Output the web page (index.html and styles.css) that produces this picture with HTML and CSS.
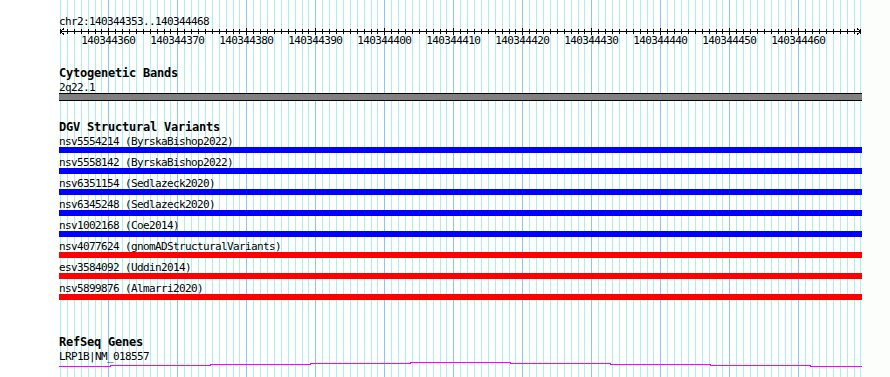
FILE: index.html
```html
<!DOCTYPE html>
<html>

<head>
    <link rel="stylesheet" href="styles.css">
</head>

<body>

    <div class="page">
        <div class="gutter"></div>

        <div class="tracks">
            <svg class="grid" id="grid" width="803" height="377"></svg>

            <div class="label locus">chr2:140344353..140344468</div>
            <svg class="ruler" id="ruler" width="803" height="20">
                <line x1="1" y1="4.5" x2="802" y2="4.5" class="axis" />
                <polyline points="5,1.5 1.5,4.5 5,7.5" class="axis" />
                <polyline points="798,1.5 801.5,4.5 798,7.5" class="axis" />
            </svg>

            <section class="track cyto">
                <h2 class="track-title">Cytogenetic Bands</h2>
                <div class="label">2q22.1</div>
                <div class="band"></div>
            </section>

            <section class="track dgv">
                <h2 class="track-title">DGV Structural Variants</h2>
                <div class="label">nsv5554214 (ByrskaBishop2022)</div>
                <div class="bar gain"></div>
                <div class="label">nsv5558142 (ByrskaBishop2022)</div>
                <div class="bar gain"></div>
                <div class="label">nsv6351154 (Sedlazeck2020)</div>
                <div class="bar gain"></div>
                <div class="label">nsv6345248 (Sedlazeck2020)</div>
                <div class="bar gain"></div>
                <div class="label">nsv1002168 (Coe2014)</div>
                <div class="bar gain"></div>
                <div class="label">nsv4077624 (gnomADStructuralVariants)</div>
                <div class="bar loss"></div>
                <div class="label">esv3584092 (Uddin2014)</div>
                <div class="bar loss"></div>
                <div class="label">nsv5899876 (Almarri2020)</div>
                <div class="bar loss"></div>
            </section>

            <section class="track refseq">
                <h2 class="track-title">RefSeq Genes</h2>
                <div class="label">LRP1B|NM_018557</div>
                <svg class="gene" width="803" height="6">
                    <polyline points="0,4.5 51,4.5 51,3.5 151,3.5 151,2.5 251,2.5 251,1.5 351,1.5 351,0.5 451,0.5 451,1.5 551,1.5 551,2.5 651,2.5 651,3.5 751,3.5 751,4.5 803,4.5" />
                </svg>
            </section>
        </div>

        <div class="margin"></div>
    </div>

    <script>
        // 116 bases from 140344353 to 140344468, 6.9px each
        const start = 140344353;
        const bases = 116;
        const bp = 6.9;
        const ns = "http://www.w3.org/2000/svg";

        let grid = document.getElementById("grid");
        let ruler = document.getElementById("ruler");

        function el(name, attrs, parent) {
            let node = document.createElementNS(ns, name);
            for (let k in attrs) {
                node.setAttribute(k, attrs[k]);
            }
            parent.appendChild(node);
            return node;
        }

        for (let i = 0; i <= bases; i++) {
            let x = Math.round(60 + i * bp) - 59 + 0.5;
            let major = (start + i) % 10 === 0;

            el("line", { x1: x, y1: 0, x2: x, y2: 377, class: major ? "major" : "minor" }, grid);
            el("line", { x1: x, y1: major ? 1 : 2, x2: x, y2: major ? 8 : 7, class: "axis" }, ruler);

            if (major) {
                let t = el("text", { x: 1 + i * bp, y: 17, class: "tick-label" }, ruler);
                t.textContent = start + i;
            }
        }
    </script>

</body>

</html>
```

FILE: styles.css
```css
html,
body {
    margin: 0;
    background: #ffffff;
}

.page {
    display: flex;
    min-height: 377px;
}

.gutter {
    width: 59px;
    flex: none;
}

.margin {
    flex: 1;
    background: #fbfefb;
}

.tracks {
    position: relative;
    z-index: 0;
    width: 803px;
    flex: none;
    padding-top: 12px;
    font-family: "DejaVu Sans Mono", "Liberation Mono", monospace;
    color: #000;
}

.grid {
    position: absolute;
    top: 0;
    left: 0;
    z-index: -1;
    shape-rendering: crispEdges;
}

.grid .minor {
    stroke: #aeeeee;
    stroke-width: 1;
}

.grid .major {
    stroke: #86c8f2;
    stroke-width: 1;
}

.label {
    height: 11px;
    padding-top: 4px;
    font-size: 11px;
    line-height: 11px;
    letter-spacing: -0.62px;
    white-space: nowrap;
}

.ruler {
    display: block;
    shape-rendering: crispEdges;
}

.ruler .axis {
    stroke: #000;
    stroke-width: 1;
    fill: none;
}

.tick-label {
    font-family: "DejaVu Sans Mono", "Liberation Mono", monospace;
    font-size: 11px;
    letter-spacing: -0.62px;
    text-anchor: middle;
    fill: #000;
}

.track {
    margin-top: 22px;
}

.refseq {
    margin-top: 38px;
}

.track-title {
    margin: 0;
    height: 9px;
    font-size: 12px;
    line-height: 9px;
    font-weight: bold;
    letter-spacing: -0.22px;
}

.band {
    height: 6px;
    background: #808080;
    border-top: 1px solid #000;
    border-bottom: 1px solid #000;
}

.bar {
    height: 6px;
}

.gain {
    background: #0000ff;
}

.loss {
    background: #ff0000;
}

.gene {
    display: block;
    shape-rendering: crispEdges;
}

.gene polyline {
    fill: none;
    stroke: #ff00ff;
    stroke-width: 1;
}
```
